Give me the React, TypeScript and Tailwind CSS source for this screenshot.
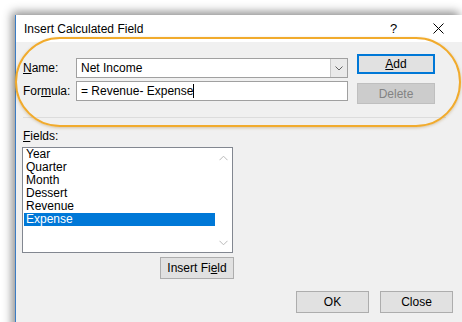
import React from 'react';

const font = { fontFamily: '"Liberation Sans", Arial, sans-serif' };

const fields = ['Year', 'Quarter', 'Month', 'Dessert', 'Revenue', 'Expense'];

function Chevron({ down }: { down?: boolean }) {
  return (
    <svg width="9" height="6" viewBox="0 0 9 6" className="block">
      <path
        d={down ? 'M0.5 0.8 L4.5 4.8 L8.5 0.8' : 'M0.5 5.2 L4.5 1.2 L8.5 5.2'}
        fill="none"
        stroke="#b9b9b9"
        strokeWidth="1"
      />
    </svg>
  );
}

function WinButton({
  children,
  className = '',
  disabled,
  focused,
}: {
  children: React.ReactNode;
  className?: string;
  disabled?: boolean;
  focused?: boolean;
}) {
  const look = focused
    ? 'border-2 border-[#0078d7] bg-[#e1e1e1] text-black'
    : disabled
    ? 'border border-[#bfbfbf] bg-[#cccccc] text-[#838383]'
    : 'border border-[#adadad] bg-[#e1e1e1] text-black';
  return (
    <div className={`flex items-center justify-center text-[12px] leading-none ${look} ${className}`}>
      {children}
    </div>
  );
}

export default function App() {
  return (
    <div className="relative w-[462px] h-[322px] overflow-hidden bg-white pl-[15px] pt-[15px]" style={font}>
      {/* dialog window */}
      <div className="w-[447px] h-[320px] border-l border-[#3c7dc4] shadow-[-3px_-3px_9px_rgba(0,0,0,0.45)] bg-[#f0f0f0]">
        {/* title bar */}
        <div className="h-[27px] bg-white flex items-center pl-[8px] text-[12px] text-black">
          <span className="flex-1">Insert Calculated Field</span>
          <span className="w-[10px] text-[13px] mr-[33px]">?</span>
          <svg width="11" height="11" viewBox="0 0 11 11" className="mr-[18px]">
            <path d="M0.5 0.5 L10.5 10.5 M10.5 0.5 L0.5 10.5" stroke="#000" strokeWidth="1" />
          </svg>
        </div>

        {/* body */}
        <div className="pl-[7px] pt-[12px] text-[12px] text-black">
          <div className="flex items-start">
            <div className="mt-[4px] flex flex-col gap-[3px]">
              <div className="flex items-center h-[20px]">
                <span className="w-[53px]">
                  <u>N</u>ame:
                </span>
                <div className="flex w-[272px] h-[20px] border border-[#a0a0a0] bg-white">
                  <span className="flex-1 pl-[4px] leading-[18px]">Net Income</span>
                  <div className="w-[17px] h-full border-l border-[#c8c8c8] bg-[#eaeaea] flex items-center justify-center">
                    <svg width="8" height="5" viewBox="0 0 8 5">
                      <path d="M0.5 0.5 L4 4 L7.5 0.5" fill="none" stroke="#606060" strokeWidth="1" />
                    </svg>
                  </div>
                </div>
              </div>
              <div className="flex items-center h-[20px]">
                <span className="w-[53px]">
                  For<u>m</u>ula:
                </span>
                <div className="flex items-center w-[272px] h-[20px] border border-[#a0a0a0] bg-white pl-[4px] leading-[18px]">
                  <span>= Revenue- Expense</span>
                  <span className="w-px h-[14px] bg-black" />
                </div>
              </div>
            </div>
            <div className="ml-[9px] flex flex-col gap-[9px]">
              <WinButton focused className="w-[78px] h-[20px]">
                <span>
                  <u>A</u>dd
                </span>
              </WinButton>
              <WinButton disabled className="w-[78px] h-[21px]">
                Delete
              </WinButton>
            </div>
          </div>

          <div className="mt-[13px] h-px w-[423px] bg-[#dcdcdc]" />

          <div className="mt-[11px] leading-[15px]">
            <u>F</u>ields:
          </div>

          <div className="mt-[3px] -ml-px w-[211px]">
            <div className="flex h-[106px] border border-[#828790] bg-white">
              <div className="flex-1 pl-px">
                {fields.map((f) => (
                  <div
                    key={f}
                    className={`h-[13px] leading-[13px] pl-[2px] ${
                      f === 'Expense' ? 'bg-[#0078d7] text-white' : 'text-black'
                    }`}
                  >
                    {f}
                  </div>
                ))}
              </div>
              <div className="w-[17px] flex flex-col items-center justify-between pt-[7px] pb-[6px]">
                <Chevron />
                <Chevron down />
              </div>
            </div>
            <div className="flex justify-end mt-[4px]">
              <WinButton className="w-[74px] h-[22px] mr-[-1px]">
                <span>
                  Insert Fi<u>e</u>ld
                </span>
              </WinButton>
            </div>
          </div>

          <div className="flex justify-end gap-[11px] mt-[12px] pr-[9px]">
            <WinButton className="w-[73px] h-[22px]">OK</WinButton>
            <WinButton className="w-[73px] h-[22px]">Close</WinButton>
          </div>
        </div>
      </div>

      {/* highlight ring drawn over the dialog */}
      <div className="absolute left-[15px] top-[37px] w-[446px] h-[90px] rounded-[45px] border-[2.5px] border-[#f1ab2d] shadow-[0_1px_3px_rgba(160,110,20,0.35)] pointer-events-none" />
    </div>
  );
}
